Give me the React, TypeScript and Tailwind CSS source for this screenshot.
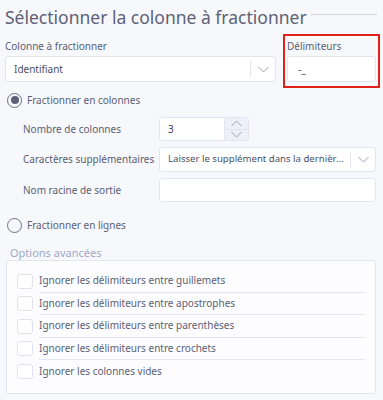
import React from "react";

const Chevron = ({ up = false, className = "" }: { up?: boolean; className?: string }) => (
  <svg width="11" height="7" viewBox="0 0 11 7" className={className} fill="none">
    {up ? (
      <path d="M0.5 6 L5.5 1 L10.5 6" stroke="#9aa0b4" strokeWidth="1" />
    ) : (
      <path d="M0.5 1 L5.5 6 L10.5 1" stroke="#9aa0b4" strokeWidth="1" />
    )}
  </svg>
);

const Radio = ({ checked }: { checked?: boolean }) => (
  <div className="w-[15px] h-[15px] rounded-full border-[1.5px] border-[#6a6f85] flex items-center justify-center shrink-0">
    {checked && <div className="w-[8px] h-[8px] rounded-full bg-[#5b6078]" />}
  </div>
);

const SelectBox = ({ text, className = "", textClass = "text-[10px]" }: { text: string; className?: string; textClass?: string }) => (
  <div className={`flex items-center min-w-0 bg-white border border-[#e3e6f1] rounded-[3px] ${className}`}>
    <div className={`flex-1 min-w-0 pl-[8px] pr-[4px] truncate text-[#4a5064] ${textClass}`}>{text}</div>
    <div className="w-px h-[16px] bg-[#e3e6f1] shrink-0" />
    <div className="w-[24px] shrink-0 flex items-center justify-center">
      <Chevron />
    </div>
  </div>
);

export default function App() {
  const checks = [
    "Ignorer les délimiteurs entre guillemets",
    "Ignorer les délimiteurs entre apostrophes",
    "Ignorer les délimiteurs entre parenthèses",
    "Ignorer les délimiteurs entre crochets",
    "Ignorer les colonnes vides",
  ];
  return (
    <div
      className="w-[383px] h-[400px] bg-[#f7f8fc] overflow-hidden text-[#5a6074]"
      style={{ fontFamily: '"Noto Sans", sans-serif' }}
    >
      {/* Title */}
      <div className="h-[34px] flex items-center pl-[5px] pr-[6px]">
        <div className="text-[17.5px] leading-[24px] text-[#5d6276] whitespace-nowrap">
          Sélectionner la colonne à fractionner
        </div>
        <div className="flex-1 h-px bg-[#d4d7e2] ml-[4px] mb-[5px]" />
      </div>

      {/* Column + delimiters */}
      <div className="flex pl-[5px]">
        <div className="w-[271px] pt-[4px] flex flex-col">
          <div className="h-[16px] leading-[16px] text-[10px]">Colonne à fractionner</div>
          <SelectBox text="Identifiant" className="mt-[2px] h-[26px]" />
        </div>
        <div className="ml-[7px] w-[97px] h-[54px] border-2 border-[#e3211b] px-[2px] pt-[2px] flex flex-col">
          <div className="h-[16px] leading-[16px] text-[10px]">Délimiteurs</div>
          <div className="mt-[2px] h-[26px] bg-white border border-[#e3e6f1] rounded-[3px] flex items-center pl-[10px] text-[10px] text-[#4a5064]">
            -_
          </div>
        </div>
      </div>

      {/* Radio 1 */}
      <div className="h-[24px] flex items-center pl-[7px] gap-[5px] text-[10px]">
        <Radio checked />
        <span>Fractionner en colonnes</span>
      </div>

      <div className="flex flex-col pl-[23px] pr-[7px] pt-[5px] text-[10px]">
        <div className="flex items-center h-[24px]">
          <div className="w-[136px] shrink-0">Nombre de colonnes</div>
          <div className="w-[90px] h-[24px] flex bg-white border border-[#e3e6f1] rounded-[3px] overflow-hidden">
            <div className="flex-1 flex items-center pl-[8px] text-[#3f4558]">3</div>
            <div className="w-[24px] flex flex-col bg-[#eef0f8] border-l border-[#e3e6f1]">
              <div className="flex-1 flex items-center justify-center">
                <Chevron up />
              </div>
              <div className="h-px bg-[#e0e3ef]" />
              <div className="flex-1 flex items-center justify-center">
                <Chevron />
              </div>
            </div>
          </div>
        </div>
        <div className="flex items-center h-[25px] mt-[6px]">
          <div className="w-[136px] shrink-0 whitespace-nowrap">Caractères supplémentaires</div>
          <SelectBox
            text="Laisser le supplément dans la dernière colonne"
            className="flex-1 h-[25px]"
            textClass="text-[9.6px]"
          />
        </div>
        <div className="flex items-center h-[24px] mt-[6px]">
          <div className="w-[136px] shrink-0">Nom racine de sortie</div>
          <div className="flex-1 h-[24px] bg-white border border-[#e3e6f1] rounded-[3px]" />
        </div>
      </div>

      {/* Radio 2 */}
      <div className="h-[24px] mt-[11px] flex items-center pl-[7px] gap-[5px] text-[10px]">
        <Radio />
        <span>Fractionner en lignes</span>
      </div>

      <div className="pl-[10px] mt-[9px] h-[14px] leading-[14px] text-[11px] text-[#9ea8c6]">
        Options avancées
      </div>

      <div className="ml-[6px] w-[370px] h-[134px] bg-[#fdfdff] border border-[#e3e6f1] rounded-[3px] pt-[9px] pr-[10px]">
        {checks.map((c, i) => (
          <div key={c} className="flex items-center">
            <div className="w-[16px] h-[15px] ml-[10px] mr-[6px] bg-white border border-[#dfe2ee] rounded-[3px] shrink-0" />
            <div
              className={`flex-1 h-[22.5px] flex items-center text-[10px] ${
                i < checks.length - 1 ? "border-b border-[#e3e6f1]" : ""
              }`}
            >
              {c}
            </div>
          </div>
        ))}
      </div>
    </div>
  );
}
